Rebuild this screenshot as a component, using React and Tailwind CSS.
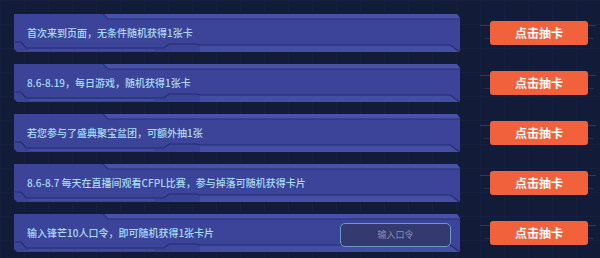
import React from "react";

const tasks = [
  { id: 1, text: "首次来到页面，无条件随机获得1张卡" },
  { id: 2, text: "8.6-8.19，每日游戏，随机获得1张卡" },
  { id: 3, text: "若您参与了盛典聚宝盆团，可额外抽1张" },
  { id: 4, text: "8.6-8.7 每天在直播间观看CFPL比赛，参与掉落可随机获得卡片" },
  { id: 5, text: "输入锋芒10人口令，即可随机获得1张卡片", input: true },
];

// decorative bevel lines on top of each panel
function PanelTrim() {
  return (
    <svg
      className="absolute inset-0 pointer-events-none"
      width="446"
      height="38"
      viewBox="0 0 446 38"
      aria-hidden="true"
    >
      <polygon points="89,0 443,0 446,4 446,5 94,5" fill="#4852a9" />
      <path d="M89 0 L94 5 H446" stroke="#283077" strokeWidth="1.2" fill="none" />
      <polygon points="186,31 436,31 444,38 186,38" fill="#444ea5" />
      <path
        d="M1 28 H7 L12 34 H150 L155 30 H182 L186 31 H436 L446 38"
        stroke="#262d72"
        strokeWidth="1.2"
        fill="none"
      />
      <path d="M16 36 H140" stroke="#4a55ad" strokeWidth="1" />
    </svg>
  );
}

function DrawButton() {
  return (
    <div className="relative ml-[30px] flex items-center">
      <div className="absolute -left-[10px] right-[-8px] top-[4px] h-px bg-[#3b4666]/70" />
      <div className="absolute -left-[6px] right-[-6px] bottom-[6px] h-px bg-[#3b4666]/50" />
      <button className="relative w-[98px] h-[24px] rounded-[3px] bg-[#f1613b] text-white text-[12px] font-bold leading-none">
        点击抽卡
      </button>
    </div>
  );
}

export default function App() {
  return (
    <div
      className="w-[600px] h-[258px] overflow-hidden bg-[#121b37] bg-[linear-gradient(rgba(70,100,170,0.06)_1px,transparent_1px),linear-gradient(90deg,rgba(70,100,170,0.06)_1px,transparent_1px)] bg-[size:24px_24px] pt-[14px] flex flex-col gap-[12px]"
      style={{ fontFamily: '"Noto Sans CJK SC", "Noto Sans", sans-serif' }}
    >
      {tasks.map((t) => (
        <div key={t.id} className="flex items-center h-[38px]">
          <div className="relative ml-[14px] w-[446px] h-[38px] bg-[#3b4498] [clip-path:polygon(0_0,443px_0,446px_4px,446px_38px,3px_38px,0_35px)] flex items-center justify-between pl-[13px] pr-[9px]">
            <PanelTrim />
            <span className="relative text-[10px] font-medium text-[#a8dcf6] leading-none">
              {t.text}
            </span>
            {t.input && (
              <input
                placeholder="输入口令"
                className="relative mt-[3px] w-[111px] h-[24px] rounded-[5px] border border-[#6d98bf] bg-[#343a70] text-center text-[9px] text-[#858eb5] placeholder:text-[#858eb5] outline-none"
              />
            )}
          </div>
          <DrawButton />
        </div>
      ))}
    </div>
  );
}
